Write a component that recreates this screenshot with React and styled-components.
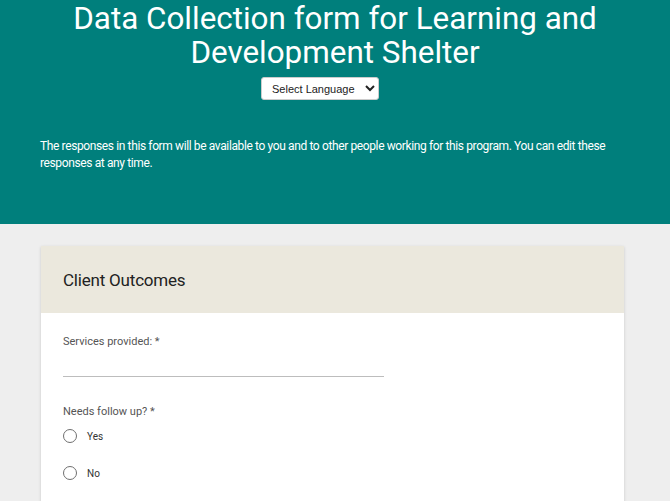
import React from "react";
import styled, { createGlobalStyle } from "styled-components";

const Global = createGlobalStyle`
  html, body { margin: 0; padding: 0; background: #eeeeee; }
  body { font-family: Roboto, "Liberation Sans", sans-serif; }
  * { box-sizing: border-box; }
`;

const Header = styled.header`
  background: #007f7c;
  color: #fff;
  height: 224px;
  padding: 0 40px;
  display: flex;
  flex-direction: column;
  align-items: center;
`;

const Title = styled.h1`
  margin: 0;
  padding-top: 1.5px;
  font-weight: 400;
  font-size: 31.4px;
  line-height: 34px;
  text-align: center;
`;

const LangSelect = styled.select`
  margin: 7.5px 30px 0 0;
  width: 118px;
  height: 23px;
  font-family: "Liberation Sans", Arial, sans-serif;
  font-size: 11px;
  color: #222;
  background: #fff;
  border: 1px solid #ccc;
  border-radius: 3px;
  padding: 0 6px;
`;

const Intro = styled.p`
  align-self: stretch;
  margin: 38.4px 0 0;
  font-size: 12px;
  line-height: 17px;
  letter-spacing: -0.38px;
`;

const Main = styled.main`
  padding: 22px 46px 40px 41px;
`;

const Card = styled.section`
  background: #fff;
  box-shadow: 0 1px 3px rgba(0, 0, 0, 0.15);
`;

const CardHead = styled.div`
  background: #ebe8dd;
  height: 67px;
  padding: 0 22px;
  display: flex;
  align-items: center;
`;

const CardTitle = styled.h2`
  margin: 0;
  font-size: 17px;
  font-weight: 400;
  letter-spacing: -0.2px;
  color: #222;
`;

const CardBody = styled.div`
  padding: 21px 22px 20px;
`;

const Field = styled.div`
  margin-bottom: 27px;
`;

const Label = styled.div`
  font-size: 11px;
  color: #555;
  line-height: 16px;
`;

const TextInput = styled.input`
  display: block;
  margin-top: 2px;
  width: 321px;
  height: 25px;
  border: none;
  border-bottom: 1px solid #bdbdbd;
  outline: none;
  background: transparent;
`;

const RadioRow = styled.label`
  display: flex;
  align-items: center;
  gap: 10px;
  height: 20px;
  margin-top: ${(p) => p.$gap}px;
  font-size: 10px;
  color: #333;
`;

const Circle = styled.span`
  width: 14px;
  height: 14px;
  border-radius: 50%;
  border: 1.5px solid #6f6f6f;
`;

export default function App() {
  return (
    <>
      <Global />
      <Header>
        <Title>
          Data Collection form for Learning and
          <br />
          Development Shelter
        </Title>
        <LangSelect defaultValue="">
          <option value="">Select Language</option>
        </LangSelect>
        <Intro>
          The responses in this form will be available to you and to other people working for this
          program. You can edit these responses at any time.
        </Intro>
      </Header>
      <Main>
        <Card>
          <CardHead>
            <CardTitle>Client Outcomes</CardTitle>
          </CardHead>
          <CardBody>
            <Field>
              <Label>Services provided: *</Label>
              <TextInput type="text" />
            </Field>
            <Field>
              <Label>Needs follow up? *</Label>
              <RadioRow $gap={6}>
                <Circle />
                Yes
              </RadioRow>
              <RadioRow $gap={17}>
                <Circle />
                No
              </RadioRow>
            </Field>
          </CardBody>
        </Card>
      </Main>
    </>
  );
}
